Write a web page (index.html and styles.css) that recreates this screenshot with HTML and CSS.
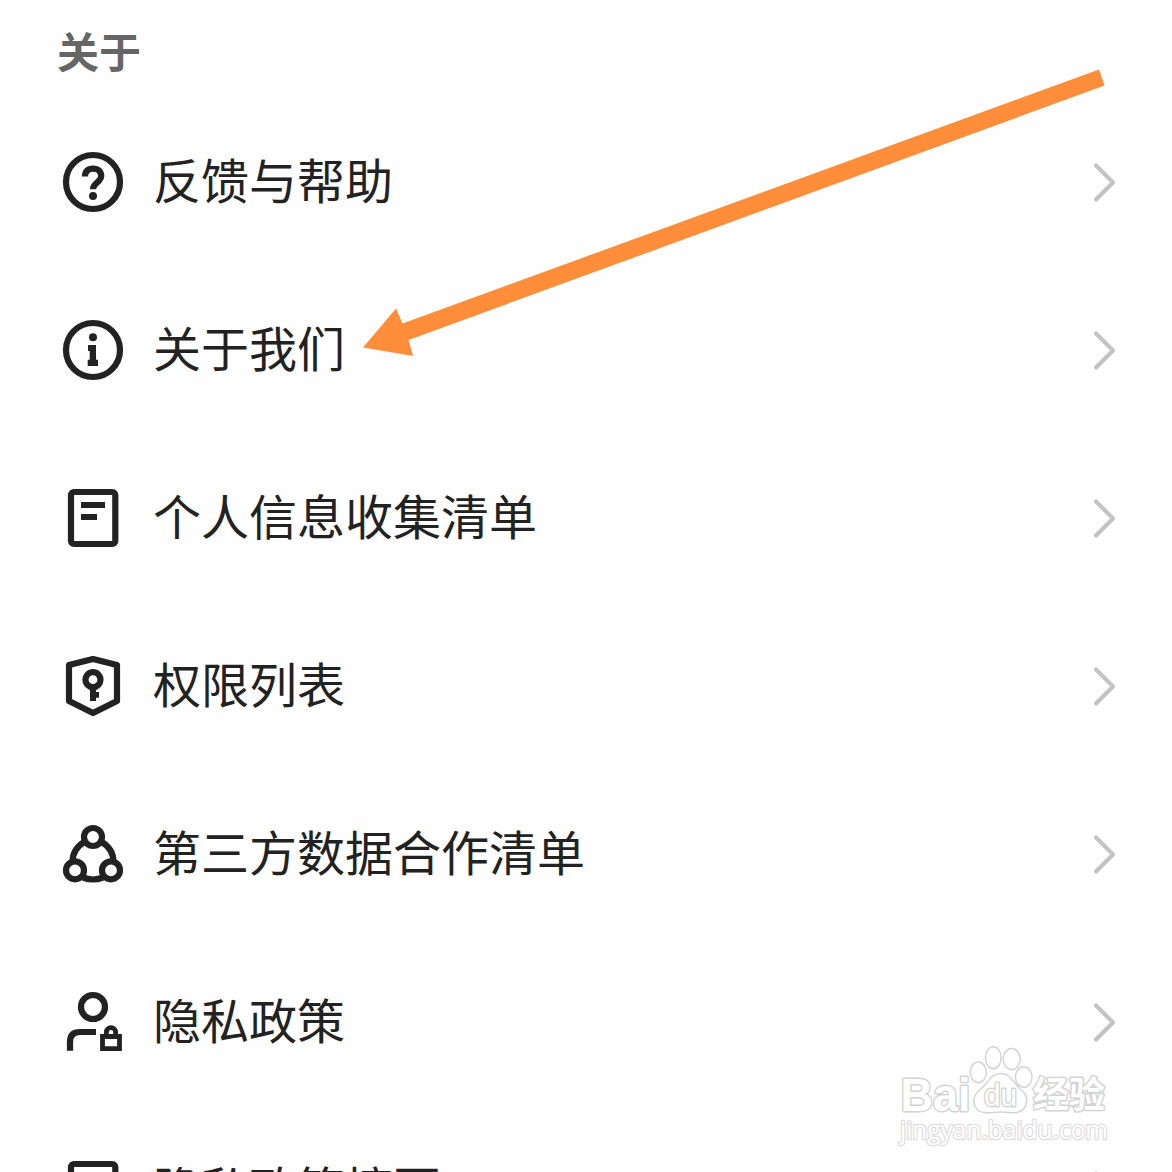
FILE: index.html
```html
<!DOCTYPE html>
<html lang="zh-CN">
<head>
<meta charset="utf-8">
<title>关于</title>
<link rel="stylesheet" href="styles.css">
</head>
<body>
<svg class="defs" width="0" height="0">
  <symbol id="chevron" viewBox="0 0 24 42"><path d="M4 4.5 21 21.5 4 38.5"/></symbol>
  <symbol id="doc" viewBox="0 0 72 72"><rect x="14" y="10" width="44.3" height="52" rx="3"/><path d="M24 23H48M24 35H40"/></symbol>
</svg>
<main class="page">
  <h1 class="heading">关于</h1>
  <ul class="list">
    <li class="row">
      <svg class="icon" viewBox="0 0 72 72"><circle cx="36" cy="36" r="27"/><path d="M28 30.5C28 25.2 31 22.6 36 22.6S44.2 25.6 44.2 30C44.2 36.2 36 36.5 36 43.3"/><circle class="solid" cx="36" cy="50" r="4"/></svg>
      <span class="label">反馈与帮助</span>
      <svg class="chevron"><use href="#chevron"/></svg>
    </li>
    <li class="row">
      <svg class="icon" viewBox="0 0 72 72"><circle cx="36" cy="36" r="27"/><circle class="solid" cx="36" cy="23.3" r="4"/><path class="solid" d="M31 31H39V45.7H41V52H30.7V45.7H32.7V37H31Z"/></svg>
      <span class="label">关于我们</span>
      <svg class="chevron"><use href="#chevron"/></svg>
    </li>
    <li class="row">
      <svg class="icon"><use href="#doc"/></svg>
      <span class="label">个人信息收集清单</span>
      <svg class="chevron"><use href="#chevron"/></svg>
    </li>
    <li class="row">
      <svg class="icon" viewBox="0 0 72 72"><path class="round" d="M36 9 60 15V51L36 63 12 51V15Z"/><circle cx="36" cy="29.7" r="7.5"/><path class="solid" d="M33 37H39V42H42V47.7H39V51H33Z"/></svg>
      <span class="label">权限列表</span>
      <svg class="chevron"><use href="#chevron"/></svg>
    </li>
    <li class="row">
      <svg class="icon" viewBox="0 0 72 72"><circle cx="36" cy="19" r="9"/><circle cx="18" cy="52.3" r="9"/><circle cx="54" cy="52.3" r="9"/><path d="M28 23.5C19.5 28.5 15.5 36 15.5 44M44 23.5C52.5 28.5 56.5 36 56.5 44M26 59.5Q36 63.5 46 59.5"/></svg>
      <span class="label">第三方数据合作清单</span>
      <svg class="chevron"><use href="#chevron"/></svg>
    </li>
    <li class="row">
      <svg class="icon" viewBox="0 0 72 72"><circle cx="36" cy="21" r="12"/><path d="M13 64.7V56Q13 46 23 46H39"/><path class="lock" d="M45.5 50.5H62.5V62.7H45.5ZM49.4 50V46.2A4.6 4.6 0 0 1 58.6 46.2V50"/></svg>
      <span class="label">隐私政策</span>
      <svg class="chevron"><use href="#chevron"/></svg>
    </li>
    <li class="row">
      <svg class="icon"><use href="#doc"/></svg>
      <span class="label">隐私政策摘要</span>
      <svg class="chevron"><use href="#chevron"/></svg>
    </li>
  </ul>
  <svg class="arrow" viewBox="0 0 750 300"><path d="M3 287.5 36 248.5 42.5 263.5 739 9.5 744.5 25.5 48.5 280 53 296Z"/></svg>
  <svg class="watermark" viewBox="0 0 220 110">
    <g class="mark">
      <text class="bai" x="8.5" y="71" textLength="70" lengthAdjust="spacingAndGlyphs">Bai</text>
      <ellipse cx="86.3" cy="32.3" rx="8" ry="10.3"/>
      <ellipse cx="101.3" cy="17.7" rx="7.8" ry="11"/>
      <ellipse cx="119.7" cy="19" rx="8.5" ry="10.5"/>
      <ellipse cx="131.7" cy="37" rx="8.3" ry="10.3"/>
      <path d="M108.7 33.5C99 33.5 96.5 42 90 48 82 54 80 60 83 66 88 76 98 72 108.7 72S126 76 133 67C137 59 134 53 127 48 121 42 118.500 33.5 108.700 33.5Z"/>
      <text class="du" x="92" y="66" textLength="33" lengthAdjust="spacingAndGlyphs">du</text>
      <text class="cn" x="141" y="68" textLength="72" lengthAdjust="spacingAndGlyphs">经验</text>
      <text class="url" x="8" y="99" textLength="208" lengthAdjust="spacingAndGlyphs">jingyan.baidu.com</text>
    </g>
  </svg>
</main>
</body>
</html>
```
FILE: styles.css
```css
* { box-sizing: border-box; }
html, body { margin: 0; height: 100%; overflow: hidden; background: #fefefe; }
.defs { position: absolute; }
.page {
  position: relative;
  height: 1172px;
  overflow: hidden;
  font-family: "Noto Sans CJK SC", sans-serif;
  color: #222;
}
.heading {
  margin: 0;
  height: 98px;
  padding: 20px 0 0 57px;
  font-size: 42px;
  line-height: 60px;
  font-weight: 700;
  color: #666;
}
.list { list-style: none; margin: 0; padding: 0; }
.row {
  display: flex;
  align-items: center;
  height: 168px;
  padding: 0 56px 0 57px;
}
.icon {
  width: 72px;
  height: 72px;
  flex: none;
  fill: none;
  stroke: #222;
  stroke-width: 6.2;
}
.icon .solid { fill: #222; stroke: none; }
.icon .round { stroke-linejoin: round; }
.icon .lock { stroke-width: 4.8; }
.label {
  flex: 1;
  margin-left: 24px;
  padding-bottom: 9px;
  font-size: 48px;
  line-height: 72px;
  white-space: nowrap;
}
.chevron {
  width: 24px;
  height: 42px;
  flex: none;
  fill: none;
  stroke: #c4c4c4;
  stroke-width: 4.2;
  stroke-linecap: round;
  stroke-linejoin: round;
}
.arrow {
  position: absolute;
  left: 360px;
  top: 60px;
  width: 750px;
  height: 300px;
  fill: #ff8d3a;
}
.watermark {
  position: absolute;
  left: 892px;
  top: 1040px;
  width: 220px;
  height: 110px;
}
.mark { fill: #fff; stroke: #d4d4d4; stroke-width: 1.5; }
.mark text { paint-order: stroke; stroke-width: 3; stroke-linejoin: round; }
.bai { font: 700 47px "Liberation Sans", sans-serif; }
.mark .du { font: 400 32px "Liberation Sans", sans-serif; }
.cn { font: 700 36px "Noto Sans CJK SC", sans-serif; }
.mark .url { font: 400 25px "Open Sans", sans-serif; stroke: #dedede; stroke-width: 2.6; }
```
